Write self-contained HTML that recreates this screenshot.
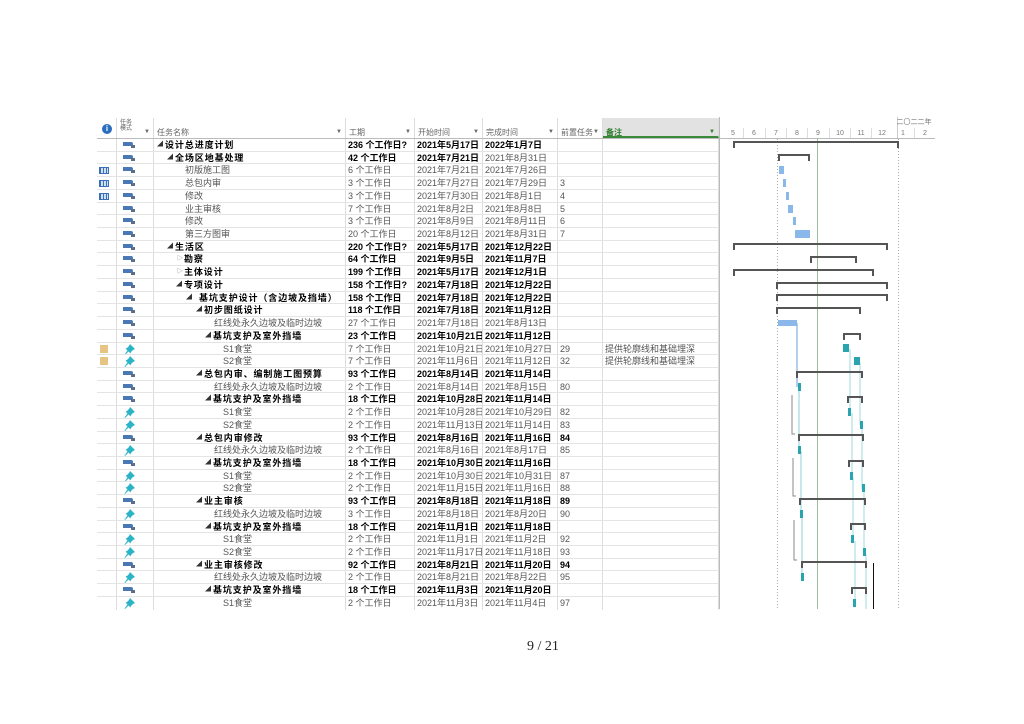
<!DOCTYPE html>
<html><head><meta charset="utf-8"><style>
*{margin:0;padding:0;box-sizing:border-box}
body{width:1024px;height:724px;background:#fff;position:relative;overflow:hidden;font-family:"Liberation Sans","Noto Sans CJK SC",sans-serif;font-size:9px;color:#333}
#tbl{position:absolute;left:97px;top:118px;width:622px}
.hd{height:21px;border-bottom:1px solid #bbb;display:flex;position:relative}
.hd div{border-right:1px solid #ddd;font-size:8px;color:#666;padding-top:9px;padding-left:3px;position:relative;white-space:nowrap}
.hd div i{position:absolute;right:3px;top:11px;font-style:normal;font-size:6px;color:#666}
.r{height:12.72px;display:flex;border-bottom:1px solid #e4e4e4;line-height:12px;white-space:nowrap}
.r>div{border-right:1px solid #ddd;overflow:hidden;position:relative}
.c0{width:20px}.c1{width:37px}.c2{width:192px}.c3{width:69px;padding-left:2px}.c4{width:68px;padding-left:2px}.c5{width:75px;padding-left:2px}.c6{width:45px;padding-left:2px}.c7{width:116px;padding-left:2px}
.s{font-weight:bold;color:#000}
.s .c2 span:last-child{letter-spacing:0.9px}
.t{color:#555}
.am{position:absolute;left:6px;top:3px;width:10px;height:4px;background:#4a78b4;border-radius:0 2px 2px 0}
.am:after{content:"";position:absolute;left:8px;top:3px;width:4px;height:3px;background:#5a6e8a}
.pin{position:absolute;left:7px;top:1px}
.tb{position:absolute;left:2px;top:3px;width:10px;height:7px;border:1px solid #3b6fb6;background:repeating-linear-gradient(90deg,#3b6fb6 0 1px,#cfe0f5 1px 3px)}
.nt{position:absolute;left:3px;top:2px;width:8px;height:8px;background:#e6c483}
.tri{position:absolute;font-size:6px;color:#333;top:0}
</style></head><body>
<div id="tbl">
<div class="hd">
<div style="width:20px"><span style="position:absolute;left:5px;top:6px;width:10px;height:10px;border-radius:50%;background:#2a6fbd;color:#fff;font-weight:bold;font-size:8px;text-align:center;line-height:10px">i</span></div>
<div style="width:37px;font-size:6px;padding-top:2px;line-height:6px">任务<br>模式<i>▼</i></div>
<div style="width:192px">任务名称<i>▼</i></div>
<div style="width:69px">工期<i>▼</i></div>
<div style="width:68px">开始时间<i>▼</i></div>
<div style="width:75px">完成时间<i>▼</i></div>
<div style="width:45px">前置任务<i>▼</i></div>
<div style="width:116px;background:#e2e2e2;color:#2a7a2a;font-weight:bold;border-bottom:2px solid #3a8a3a">备注<i style="color:#2a7a2a">▼</i></div>
</div>

<div class="r s"><div class="c0"></div><div class="c1"><b class="am"></b></div><div class="c2"><span class="tri" style="left:3px">◢</span><span style="position:absolute;left:11px">设计总进度计划</span></div><div class="c3">236 个工作日?</div><div class="c4">2021年5月17日</div><div class="c5">2022年1月7日</div><div class="c6"></div><div class="c7"></div></div>
<div class="r s"><div class="c0"></div><div class="c1"><b class="am"></b></div><div class="c2"><span class="tri" style="left:13px">◢</span><span style="position:absolute;left:21px">全场区地基处理</span></div><div class="c3">42 个工作日</div><div class="c4">2021年7月21日</div><div class="c5" style="font-weight:normal;color:#555">2021年8月31日</div><div class="c6"></div><div class="c7"></div></div>
<div class="r t"><div class="c0"><b class="tb"></b></div><div class="c1"><b class="am"></b></div><div class="c2"><span style="position:absolute;left:31px">初版施工图</span></div><div class="c3">6 个工作日</div><div class="c4">2021年7月21日</div><div class="c5">2021年7月26日</div><div class="c6"></div><div class="c7"></div></div>
<div class="r t"><div class="c0"><b class="tb"></b></div><div class="c1"><b class="am"></b></div><div class="c2"><span style="position:absolute;left:31px">总包内审</span></div><div class="c3">3 个工作日</div><div class="c4">2021年7月27日</div><div class="c5">2021年7月29日</div><div class="c6">3</div><div class="c7"></div></div>
<div class="r t"><div class="c0"><b class="tb"></b></div><div class="c1"><b class="am"></b></div><div class="c2"><span style="position:absolute;left:31px">修改</span></div><div class="c3">3 个工作日</div><div class="c4">2021年7月30日</div><div class="c5">2021年8月1日</div><div class="c6">4</div><div class="c7"></div></div>
<div class="r t"><div class="c0"></div><div class="c1"><b class="am"></b></div><div class="c2"><span style="position:absolute;left:31px">业主审核</span></div><div class="c3">7 个工作日</div><div class="c4">2021年8月2日</div><div class="c5">2021年8月8日</div><div class="c6">5</div><div class="c7"></div></div>
<div class="r t"><div class="c0"></div><div class="c1"><b class="am"></b></div><div class="c2"><span style="position:absolute;left:31px">修改</span></div><div class="c3">3 个工作日</div><div class="c4">2021年8月9日</div><div class="c5">2021年8月11日</div><div class="c6">6</div><div class="c7"></div></div>
<div class="r t"><div class="c0"></div><div class="c1"><b class="am"></b></div><div class="c2"><span style="position:absolute;left:31px">第三方图审</span></div><div class="c3">20 个工作日</div><div class="c4">2021年8月12日</div><div class="c5">2021年8月31日</div><div class="c6">7</div><div class="c7"></div></div>
<div class="r s"><div class="c0"></div><div class="c1"><b class="am"></b></div><div class="c2"><span class="tri" style="left:13px">◢</span><span style="position:absolute;left:21px">生活区</span></div><div class="c3">220 个工作日?</div><div class="c4">2021年5月17日</div><div class="c5">2021年12月22日</div><div class="c6"></div><div class="c7"></div></div>
<div class="r s"><div class="c0"></div><div class="c1"><b class="am"></b></div><div class="c2"><span class="tri" style="left:23px;color:#999">▷</span><span style="position:absolute;left:30px">勘察</span></div><div class="c3">64 个工作日</div><div class="c4">2021年9月5日</div><div class="c5">2021年11月7日</div><div class="c6"></div><div class="c7"></div></div>
<div class="r s"><div class="c0"></div><div class="c1"><b class="am"></b></div><div class="c2"><span class="tri" style="left:23px;color:#999">▷</span><span style="position:absolute;left:30px">主体设计</span></div><div class="c3">199 个工作日</div><div class="c4">2021年5月17日</div><div class="c5">2021年12月1日</div><div class="c6"></div><div class="c7"></div></div>
<div class="r s"><div class="c0"></div><div class="c1"><b class="am"></b></div><div class="c2"><span class="tri" style="left:22px">◢</span><span style="position:absolute;left:30px">专项设计</span></div><div class="c3">158 个工作日?</div><div class="c4">2021年7月18日</div><div class="c5">2021年12月22日</div><div class="c6"></div><div class="c7"></div></div>
<div class="r s"><div class="c0"></div><div class="c1"><b class="am"></b></div><div class="c2"><span class="tri" style="left:32px">◢</span><span style="position:absolute;left:45px">基坑支护设计（含边坡及挡墙）</span></div><div class="c3">158 个工作日</div><div class="c4">2021年7月18日</div><div class="c5">2021年12月22日</div><div class="c6"></div><div class="c7"></div></div>
<div class="r s"><div class="c0"></div><div class="c1"><b class="am"></b></div><div class="c2"><span class="tri" style="left:42px">◢</span><span style="position:absolute;left:50px">初步图纸设计</span></div><div class="c3">118 个工作日</div><div class="c4">2021年7月18日</div><div class="c5">2021年11月12日</div><div class="c6"></div><div class="c7"></div></div>
<div class="r t"><div class="c0"></div><div class="c1"><b class="am"></b></div><div class="c2"><span style="position:absolute;left:60px">红线处永久边坡及临时边坡</span></div><div class="c3">27 个工作日</div><div class="c4">2021年7月18日</div><div class="c5">2021年8月13日</div><div class="c6"></div><div class="c7"></div></div>
<div class="r s"><div class="c0"></div><div class="c1"><b class="am"></b></div><div class="c2"><span class="tri" style="left:51px">◢</span><span style="position:absolute;left:59px">基坑支护及室外挡墙</span></div><div class="c3">23 个工作日</div><div class="c4">2021年10月21日</div><div class="c5">2021年11月12日</div><div class="c6"></div><div class="c7"></div></div>
<div class="r t"><div class="c0"><b class="nt"></b></div><div class="c1"><svg class="pin" width="11" height="11"><path d="M6 0 L11 5 L9 6 L7 8 L6.5 9.5 L4.5 7.5 L1 11 L0.5 10.5 L3.5 6.5 L1.5 4.5 L3 4 L5 2Z" fill="#2bb3c8"/></svg></div><div class="c2"><span style="position:absolute;left:69px">S1食堂</span></div><div class="c3">7 个工作日</div><div class="c4">2021年10月21日</div><div class="c5">2021年10月27日</div><div class="c6">29</div><div class="c7">提供轮廓线和基础埋深</div></div>
<div class="r t"><div class="c0"><b class="nt"></b></div><div class="c1"><svg class="pin" width="11" height="11"><path d="M6 0 L11 5 L9 6 L7 8 L6.5 9.5 L4.5 7.5 L1 11 L0.5 10.5 L3.5 6.5 L1.5 4.5 L3 4 L5 2Z" fill="#2bb3c8"/></svg></div><div class="c2"><span style="position:absolute;left:69px">S2食堂</span></div><div class="c3">7 个工作日</div><div class="c4">2021年11月6日</div><div class="c5">2021年11月12日</div><div class="c6">32</div><div class="c7">提供轮廓线和基础埋深</div></div>
<div class="r s"><div class="c0"></div><div class="c1"><b class="am"></b></div><div class="c2"><span class="tri" style="left:42px">◢</span><span style="position:absolute;left:50px">总包内审、编制施工图预算</span></div><div class="c3">93 个工作日</div><div class="c4">2021年8月14日</div><div class="c5">2021年11月14日</div><div class="c6"></div><div class="c7"></div></div>
<div class="r t"><div class="c0"></div><div class="c1"><b class="am"></b></div><div class="c2"><span style="position:absolute;left:60px">红线处永久边坡及临时边坡</span></div><div class="c3">2 个工作日</div><div class="c4">2021年8月14日</div><div class="c5">2021年8月15日</div><div class="c6">80</div><div class="c7"></div></div>
<div class="r s"><div class="c0"></div><div class="c1"><b class="am"></b></div><div class="c2"><span class="tri" style="left:51px">◢</span><span style="position:absolute;left:59px">基坑支护及室外挡墙</span></div><div class="c3">18 个工作日</div><div class="c4">2021年10月28日</div><div class="c5">2021年11月14日</div><div class="c6"></div><div class="c7"></div></div>
<div class="r t"><div class="c0"></div><div class="c1"><svg class="pin" width="11" height="11"><path d="M6 0 L11 5 L9 6 L7 8 L6.5 9.5 L4.5 7.5 L1 11 L0.5 10.5 L3.5 6.5 L1.5 4.5 L3 4 L5 2Z" fill="#2bb3c8"/></svg></div><div class="c2"><span style="position:absolute;left:69px">S1食堂</span></div><div class="c3">2 个工作日</div><div class="c4">2021年10月28日</div><div class="c5">2021年10月29日</div><div class="c6">82</div><div class="c7"></div></div>
<div class="r t"><div class="c0"></div><div class="c1"><svg class="pin" width="11" height="11"><path d="M6 0 L11 5 L9 6 L7 8 L6.5 9.5 L4.5 7.5 L1 11 L0.5 10.5 L3.5 6.5 L1.5 4.5 L3 4 L5 2Z" fill="#2bb3c8"/></svg></div><div class="c2"><span style="position:absolute;left:69px">S2食堂</span></div><div class="c3">2 个工作日</div><div class="c4">2021年11月13日</div><div class="c5">2021年11月14日</div><div class="c6">83</div><div class="c7"></div></div>
<div class="r s"><div class="c0"></div><div class="c1"><b class="am"></b></div><div class="c2"><span class="tri" style="left:42px">◢</span><span style="position:absolute;left:50px">总包内审修改</span></div><div class="c3">93 个工作日</div><div class="c4">2021年8月16日</div><div class="c5">2021年11月16日</div><div class="c6">84</div><div class="c7"></div></div>
<div class="r t"><div class="c0"></div><div class="c1"><svg class="pin" width="11" height="11"><path d="M6 0 L11 5 L9 6 L7 8 L6.5 9.5 L4.5 7.5 L1 11 L0.5 10.5 L3.5 6.5 L1.5 4.5 L3 4 L5 2Z" fill="#2bb3c8"/></svg></div><div class="c2"><span style="position:absolute;left:60px">红线处永久边坡及临时边坡</span></div><div class="c3">2 个工作日</div><div class="c4">2021年8月16日</div><div class="c5">2021年8月17日</div><div class="c6">85</div><div class="c7"></div></div>
<div class="r s"><div class="c0"></div><div class="c1"><b class="am"></b></div><div class="c2"><span class="tri" style="left:51px">◢</span><span style="position:absolute;left:59px">基坑支护及室外挡墙</span></div><div class="c3">18 个工作日</div><div class="c4">2021年10月30日</div><div class="c5">2021年11月16日</div><div class="c6"></div><div class="c7"></div></div>
<div class="r t"><div class="c0"></div><div class="c1"><svg class="pin" width="11" height="11"><path d="M6 0 L11 5 L9 6 L7 8 L6.5 9.5 L4.5 7.5 L1 11 L0.5 10.5 L3.5 6.5 L1.5 4.5 L3 4 L5 2Z" fill="#2bb3c8"/></svg></div><div class="c2"><span style="position:absolute;left:69px">S1食堂</span></div><div class="c3">2 个工作日</div><div class="c4">2021年10月30日</div><div class="c5">2021年10月31日</div><div class="c6">87</div><div class="c7"></div></div>
<div class="r t"><div class="c0"></div><div class="c1"><svg class="pin" width="11" height="11"><path d="M6 0 L11 5 L9 6 L7 8 L6.5 9.5 L4.5 7.5 L1 11 L0.5 10.5 L3.5 6.5 L1.5 4.5 L3 4 L5 2Z" fill="#2bb3c8"/></svg></div><div class="c2"><span style="position:absolute;left:69px">S2食堂</span></div><div class="c3">2 个工作日</div><div class="c4">2021年11月15日</div><div class="c5">2021年11月16日</div><div class="c6">88</div><div class="c7"></div></div>
<div class="r s"><div class="c0"></div><div class="c1"><b class="am"></b></div><div class="c2"><span class="tri" style="left:42px">◢</span><span style="position:absolute;left:50px">业主审核</span></div><div class="c3">93 个工作日</div><div class="c4">2021年8月18日</div><div class="c5">2021年11月18日</div><div class="c6">89</div><div class="c7"></div></div>
<div class="r t"><div class="c0"></div><div class="c1"><svg class="pin" width="11" height="11"><path d="M6 0 L11 5 L9 6 L7 8 L6.5 9.5 L4.5 7.5 L1 11 L0.5 10.5 L3.5 6.5 L1.5 4.5 L3 4 L5 2Z" fill="#2bb3c8"/></svg></div><div class="c2"><span style="position:absolute;left:60px">红线处永久边坡及临时边坡</span></div><div class="c3">3 个工作日</div><div class="c4">2021年8月18日</div><div class="c5">2021年8月20日</div><div class="c6">90</div><div class="c7"></div></div>
<div class="r s"><div class="c0"></div><div class="c1"><b class="am"></b></div><div class="c2"><span class="tri" style="left:51px">◢</span><span style="position:absolute;left:59px">基坑支护及室外挡墙</span></div><div class="c3">18 个工作日</div><div class="c4">2021年11月1日</div><div class="c5">2021年11月18日</div><div class="c6"></div><div class="c7"></div></div>
<div class="r t"><div class="c0"></div><div class="c1"><svg class="pin" width="11" height="11"><path d="M6 0 L11 5 L9 6 L7 8 L6.5 9.5 L4.5 7.5 L1 11 L0.5 10.5 L3.5 6.5 L1.5 4.5 L3 4 L5 2Z" fill="#2bb3c8"/></svg></div><div class="c2"><span style="position:absolute;left:69px">S1食堂</span></div><div class="c3">2 个工作日</div><div class="c4">2021年11月1日</div><div class="c5">2021年11月2日</div><div class="c6">92</div><div class="c7"></div></div>
<div class="r t"><div class="c0"></div><div class="c1"><svg class="pin" width="11" height="11"><path d="M6 0 L11 5 L9 6 L7 8 L6.5 9.5 L4.5 7.5 L1 11 L0.5 10.5 L3.5 6.5 L1.5 4.5 L3 4 L5 2Z" fill="#2bb3c8"/></svg></div><div class="c2"><span style="position:absolute;left:69px">S2食堂</span></div><div class="c3">2 个工作日</div><div class="c4">2021年11月17日</div><div class="c5">2021年11月18日</div><div class="c6">93</div><div class="c7"></div></div>
<div class="r s"><div class="c0"></div><div class="c1"><b class="am"></b></div><div class="c2"><span class="tri" style="left:42px">◢</span><span style="position:absolute;left:50px">业主审核修改</span></div><div class="c3">92 个工作日</div><div class="c4">2021年8月21日</div><div class="c5">2021年11月20日</div><div class="c6">94</div><div class="c7"></div></div>
<div class="r t"><div class="c0"></div><div class="c1"><svg class="pin" width="11" height="11"><path d="M6 0 L11 5 L9 6 L7 8 L6.5 9.5 L4.5 7.5 L1 11 L0.5 10.5 L3.5 6.5 L1.5 4.5 L3 4 L5 2Z" fill="#2bb3c8"/></svg></div><div class="c2"><span style="position:absolute;left:60px">红线处永久边坡及临时边坡</span></div><div class="c3">2 个工作日</div><div class="c4">2021年8月21日</div><div class="c5">2021年8月22日</div><div class="c6">95</div><div class="c7"></div></div>
<div class="r s"><div class="c0"></div><div class="c1"><b class="am"></b></div><div class="c2"><span class="tri" style="left:51px">◢</span><span style="position:absolute;left:59px">基坑支护及室外挡墙</span></div><div class="c3">18 个工作日</div><div class="c4">2021年11月3日</div><div class="c5">2021年11月20日</div><div class="c6"></div><div class="c7"></div></div>
<div class="r t" style="border-bottom:none"><div class="c0"></div><div class="c1"><svg class="pin" width="11" height="11"><path d="M6 0 L11 5 L9 6 L7 8 L6.5 9.5 L4.5 7.5 L1 11 L0.5 10.5 L3.5 6.5 L1.5 4.5 L3 4 L5 2Z" fill="#2bb3c8"/></svg></div><div class="c2"><span style="position:absolute;left:69px">S1食堂</span></div><div class="c3">2 个工作日</div><div class="c4">2021年11月3日</div><div class="c5">2021年11月4日</div><div class="c6">97</div><div class="c7"></div></div>
</div>

<svg style="position:absolute;left:0;top:0" width="1024" height="724">
<line x1="719.5" y1="117" x2="719.5" y2="609" stroke="#bbb"/>
<line x1="720" y1="138.5" x2="935" y2="138.5" stroke="#bbb"/>
<line x1="897.5" y1="117" x2="897.5" y2="138" stroke="#ccc"/>
<g font-size="7" fill="#777" font-family="Liberation Sans,sans-serif" text-anchor="middle">
<text x="733" y="135">5</text><text x="754" y="135">6</text><text x="776" y="135">7</text><text x="797" y="135">8</text><text x="818" y="135">9</text><text x="840" y="135">10</text><text x="861" y="135">11</text><text x="882" y="135">12</text><text x="903" y="135">1</text><text x="925" y="135">2</text>
<text x="914" y="124" font-family="Noto Sans CJK SC,sans-serif">二〇二二年</text>
</g>
<g stroke="#ddd"><line x1="743.5" y1="128" x2="743.5" y2="138"/><line x1="765.5" y1="128" x2="765.5" y2="138"/><line x1="786.5" y1="128" x2="786.5" y2="138"/><line x1="807.5" y1="128" x2="807.5" y2="138"/><line x1="829.5" y1="128" x2="829.5" y2="138"/><line x1="850.5" y1="128" x2="850.5" y2="138"/><line x1="871.5" y1="128" x2="871.5" y2="138"/><line x1="914.5" y1="128" x2="914.5" y2="138"/></g>
<line x1="777.5" y1="139" x2="777.5" y2="609" stroke="#aaa" stroke-dasharray="1,2"/>
<line x1="898.5" y1="139" x2="898.5" y2="609" stroke="#aaa" stroke-dasharray="1,2"/>
<line x1="817.5" y1="139" x2="817.5" y2="609" stroke="#9bbf9b"/>
<g fill="none" stroke-width="1">
<path d="M797 323 V387" stroke="#6a9fdc"/>
<path d="M850 349 V412 M860 362 V425" stroke="#9fd8dd"/>
<path d="M799 388 V450 M801 451 V514 M802 515 V578" stroke="#8fcfd4"/>
<path d="M852 413 V476 M853 477 V540 M855 541 V604 M862 426 V489 M864 490 V553 M866 554 V609" stroke="#9fd8dd"/>
<path d="M792 395 V434 H795 M793 458 V496 H796 M794 520 V560 H797" stroke="#888"/>
<path d="M873.5 563 V609" stroke="#111"/>
</g>
<g fill="none" stroke="#555" stroke-width="2">
<path d="M734 148V142H898V148"/>
<path d="M779 161V155H809V161"/>
<path d="M734 250V244H887V250"/>
<path d="M811 263V257H856V263"/>
<path d="M734 276V270H873V276"/>
<path d="M777 289V283H887V289"/>
<path d="M777 301V295H887V301"/>
<path d="M777 314V308H860V314"/>
<path d="M844 340V334H860V340"/>
<path d="M797 378V372H862V378"/>
<path d="M848 403V397H862V403"/>
<path d="M799 441V435H863V441"/>
<path d="M849 467V461H863V467"/>
<path d="M800 505V499H865V505"/>
<path d="M851 530V524H865V530"/>
<path d="M802 568V562H866V568"/>
<path d="M852 594V588H866V594"/>
</g>
<g fill="#8bb8ea">
<rect x="779" y="166" width="5" height="8"/><rect x="783" y="179" width="3" height="8"/><rect x="786" y="192" width="3" height="8"/><rect x="788" y="205" width="5" height="8"/><rect x="793" y="217" width="3" height="8"/><rect x="795" y="230" width="15" height="8"/>
<rect x="778" y="320" width="19" height="6"/>
</g>
<g fill="#2aa5b0">
<rect x="843" y="344" width="6" height="8"/><rect x="854" y="357" width="6" height="8"/>
<rect x="798" y="383" width="3" height="8"/>
<rect x="848" y="408" width="3" height="8"/><rect x="860" y="421" width="3" height="8"/>
<rect x="798" y="446" width="3" height="8"/><rect x="850" y="472" width="3" height="8"/><rect x="862" y="484" width="3" height="8"/>
<rect x="800" y="510" width="3" height="8"/><rect x="851" y="535" width="3" height="8"/><rect x="863" y="548" width="3" height="8"/>
<rect x="801" y="573" width="3" height="8"/><rect x="853" y="599" width="3" height="8"/>
</g>
</svg>
<div style="position:absolute;left:513px;width:60px;top:639px;text-align:center;font-family:'Liberation Serif',serif;font-size:14px;color:#222">9 / 21</div>
</body></html>
